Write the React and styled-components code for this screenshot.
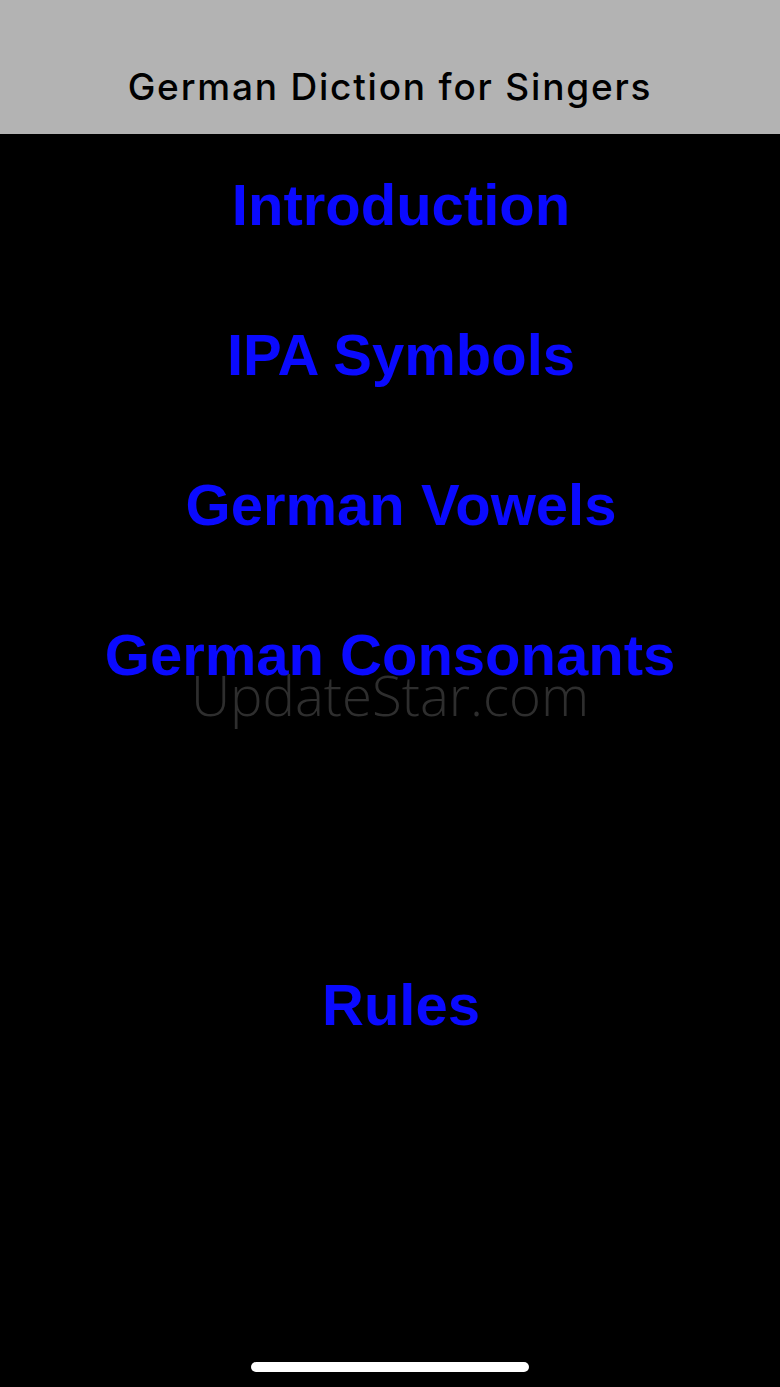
import styled, { createGlobalStyle } from 'styled-components'

const GlobalStyle = createGlobalStyle`
   html, body {
      margin: 0;
      padding: 0;
      background: #000;
   }
   #root {
      min-height: 1387px;
   }
`

const Screen = styled.div`
   position: relative;
   width: 780px;
   height: 1387px;
   background: #000;
   display: flex;
   flex-direction: column;
   overflow: hidden;
`

const NavBar = styled.header`
   height: 134px;
   background: #b3b3b3;
   display: flex;
   align-items: flex-end;
   justify-content: center;
   padding-bottom: 25px;
   box-sizing: border-box;
`

const Title = styled.h1`
   margin: 0;
   font-family: Inter, 'Liberation Sans', sans-serif;
   font-weight: 500;
   font-size: 37px;
   line-height: 44px;
   letter-spacing: 1.8px;
   color: #000;
`

const Menu = styled.nav`
   display: flex;
   flex-direction: column;
   align-items: center;
   padding-top: 39px;
   gap: 86px;
`

const MenuItem = styled.a`
   display: block;
   font-family: 'Liberation Sans', Arial, sans-serif;
   font-weight: 700;
   font-size: 58px;
   line-height: 64px;
   color: #0a0aff;
   text-decoration: none;
   margin-top: ${(props) => (props.offset ? props.offset : '0')};
   padding-left: ${(props) => (props.wide ? '0' : '22px')};
`

const Watermark = styled.div`
   position: absolute;
   left: 0;
   right: 0;
   top: 660px;
   text-align: center;
   font-family: 'Open Sans', sans-serif;
   font-weight: 300;
   font-size: 54.5px;
   line-height: 70px;
   color: #2e2e2e;
   pointer-events: none;
`

const HomeIndicator = styled.div`
   position: absolute;
   left: 251px;
   bottom: 15px;
   width: 278px;
   height: 10px;
   border-radius: 5px;
   background: #fff;
`

export default function App() {
   return (
      <Screen>
         <GlobalStyle />
         <NavBar>
            <Title>German Diction for Singers</Title>
         </NavBar>
         <Menu>
            <MenuItem href="#">Introduction</MenuItem>
            <MenuItem href="#">IPA Symbols</MenuItem>
            <MenuItem href="#">German Vowels</MenuItem>
            <MenuItem href="#" wide>
               German Consonants
            </MenuItem>
            <MenuItem href="#" offset="200px">
               Rules
            </MenuItem>
         </Menu>
         <Watermark>UpdateStar.com</Watermark>
         <HomeIndicator />
      </Screen>
   )
}
